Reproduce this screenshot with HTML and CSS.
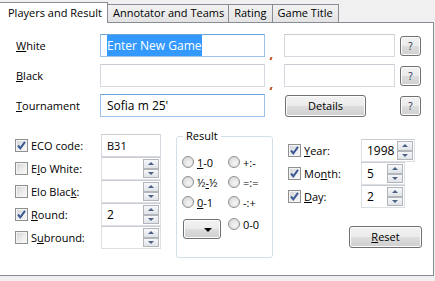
FILE: index.html
```html
<!DOCTYPE html>
<html>
<head>
<meta charset="utf-8">
<link rel="stylesheet" href="styles.css">
</head>
<body>
<div class="tabs">
  <div class="tab active">Players and Result</div>
  <div class="tab">Annotator and Teams</div>
  <div class="tab">Rating</div>
  <div class="tab">Game Title</div>
</div>
<div class="panel">
  <div class="players">
    <div class="lbl"><u>W</u>hite</div>
    <div class="tb focus"><span class="sel">Enter New Game</span></div>
    <div class="mark"></div>
    <div class="tb"></div>
    <div class="btn q">?</div>

    <div class="lbl"><u>B</u>lack</div>
    <div class="tb"></div>
    <div class="mark"></div>
    <div class="tb"></div>
    <div class="btn q">?</div>

    <div class="lbl"><u>T</u>ournament</div>
    <div class="tb focus">Sofia m 25'</div>
    <div></div>
    <div class="btn details">Details</div>
    <div class="btn q">?</div>
  </div>

  <div class="lower">
    <div class="left">
      <div class="row">
        <div class="chk on"><span class="box"></span>ECO code:</div>
        <div class="tb small">B31</div>
      </div>
      <div class="row">
        <div class="chk"><span class="box"></span>E<u>l</u>o White:</div>
        <div class="spin w60"><span class="val"></span><span class="arrows"><i class="up"></i><i class="dn"></i></span></div>
      </div>
      <div class="row">
        <div class="chk"><span class="box"></span>Elo Blac<u>k</u>:</div>
        <div class="spin w60"><span class="val"></span><span class="arrows"><i class="up"></i><i class="dn"></i></span></div>
      </div>
      <div class="row">
        <div class="chk on"><span class="box"></span><u>R</u>ound:</div>
        <div class="spin w60"><span class="val">2</span><span class="arrows"><i class="up"></i><i class="dn"></i></span></div>
      </div>
      <div class="row">
        <div class="chk"><span class="box"></span>S<u>u</u>bround:</div>
        <div class="spin w60"><span class="val"></span><span class="arrows"><i class="up"></i><i class="dn"></i></span></div>
      </div>
    </div>

    <div class="result">
      <div class="legend">Result</div>
      <div class="radios">
        <div class="radio"><span class="dot"></span><u>1</u>-0</div>
        <div class="radio"><span class="dot"></span>+:-</div>
        <div class="radio"><span class="dot"></span>½<u>-</u>½</div>
        <div class="radio"><span class="dot"></span>=:=</div>
        <div class="radio"><span class="dot"></span><u>0</u>-1</div>
        <div class="radio"><span class="dot"></span>-:+</div>
        <div class="combo"><span class="caret"></span></div>
        <div class="radio r00"><span class="dot"></span>0-0</div>
      </div>
    </div>

    <div class="right">
      <div class="row">
        <div class="chk on"><span class="box"></span><u>Y</u>ear:</div>
        <div class="spin w54"><span class="val">1998</span><span class="arrows"><i class="up"></i><i class="dn"></i></span></div>
      </div>
      <div class="row">
        <div class="chk on"><span class="box"></span>Mo<u>n</u>th:</div>
        <div class="spin w44"><span class="val">5</span><span class="arrows"><i class="up"></i><i class="dn"></i></span></div>
      </div>
      <div class="row">
        <div class="chk on"><span class="box"></span><u>D</u>ay:</div>
        <div class="spin w44"><span class="val">2</span><span class="arrows"><i class="up"></i><i class="dn"></i></span></div>
      </div>
      <div class="btn reset"><u>R</u>eset</div>
    </div>
  </div>
</div>
</body>
</html>
```

FILE: styles.css
```css
* { box-sizing: border-box; }
html, body { margin: 0; padding: 0; }
body {
  background: #f0f0f0;
  font-family: "Open Sans", "Noto Sans", sans-serif;
  font-size: 11px;
  color: #000;
  width: 435px;
  height: 281px;
  overflow: hidden;
}
u { text-decoration: underline; text-underline-offset: 1px; }

/* tabs */
.tabs {
  display: flex;
  align-items: flex-end;
  height: 22px;
}
.tab {
  height: 18px;
  padding: 0 5px;
  line-height: 16px;
  border: 1px solid #898c95;
  border-bottom: none;
  border-left: none;
  background: linear-gradient(#f2f2f2, #e3e3e3);
  white-space: nowrap;
}
.tab.active {
  position: relative;
  z-index: 1;
  height: 21px;
  margin-bottom: -1px;
  padding: 0 7px 0 8px;
  line-height: 19px;
  background: #fff;
  width: 108px;
}
.tab:nth-child(2) { padding: 0 4px 0 5px; }

/* panel */
.panel {
  width: 434px;
  height: 254px;
  background: #fff;
  border: 1px solid #898c95;
  border-left: none;
}

.players {
  display: grid;
  grid-template-columns: 84px 165px 19px 111px 21px;
  grid-auto-rows: 23px;
  row-gap: 7px;
  column-gap: 0;
  padding: 11px 0 0 16px;
  align-items: center;
}
.players .btn.q { margin-left: 5px; width: 21px; }

.tb {
  height: 23px;
  border: 1px solid #d5d9df;
  border-top-color: #c9ccd2;
  background: #fff;
  padding: 0 6px;
  line-height: 21px;
  font-size: 12px;
}
.tb.focus { border-color: #9cc4ea; border-top-color: #6ca3d9; }
.sel { background: #3399ff; color: #fff; padding: 2px 0; }
.tb.small { font-size: 11px; padding-left: 5px; }

.mark {
  align-self: end;
  justify-self: start;
  margin-left: 5px;
  margin-bottom: -3px;
  width: 2px;
  height: 3px;
  background: #c0501d;
  transform: skewX(-20deg);
}

.btn {
  height: 20px;
  border: 1px solid #707070;
  border-radius: 3px;
  background: linear-gradient(#f2f2f2 0%, #ebebeb 50%, #dddddd 51%, #cfcfcf 100%);
  box-shadow: inset 0 0 0 1px #fcfcfc;
  text-align: center;
  line-height: 18px;
}
.btn.q { font-size: 10px; color: #1a2a4a; }
.btn.details { width: 81px; height: 22px; line-height: 20px; margin-left: 1px; font-size: 11px; }

/* lower */
.lower {
  display: flex;
  align-items: flex-start;
  margin-top: 11px;
  padding-left: 15px;
}
.left { width: 146px; padding-top: 6px; display: flex; flex-direction: column; }
.row { display: flex; align-items: center; height: 23px; }
.left .row .chk { width: 86px; }
.right .row .chk { width: 73px; }

.chk { display: flex; align-items: center; white-space: nowrap; }
.chk .box {
  width: 13px;
  height: 13px;
  margin-right: 3px;
  border: 1px solid #8e8f8f;
  background: linear-gradient(135deg, #cfd1d4 0%, #eeeeee 60%, #fbfbfb 100%);
  box-shadow: inset 0 0 0 1px #f4f4f4;
  flex: none;
}
.chk.on .box {
  background:
    url("data:image/svg+xml;utf8,<svg xmlns='http://www.w3.org/2000/svg' width='11' height='11'><path d='M2 5.5 L4.3 8.3 L9 1.8' fill='none' stroke='%233b5a96' stroke-width='2'/></svg>") center/11px 11px no-repeat,
    linear-gradient(135deg, #cfd1d4 0%, #eeeeee 60%, #fbfbfb 100%);
}

.tb.small { width: 60px; }
.spin {
  display: flex;
  height: 23px;
  background: #fff;
  border: 1px solid #dcdfe3;
  border-top-color: #c9ccd2;
}
.w60 { width: 60px; }
.w54 { width: 54px; }
.w44 { width: 44px; }
.spin .val { flex: 1; padding-left: 5px; line-height: 21px; font-size: 12px; }
.spin .arrows {
  width: 17px;
  display: flex;
  flex-direction: column;
  padding: 1px 1px 1px 0;
}
.spin .arrows i {
  flex: 1;
  border: 1px solid #b2b5ba;
  background: linear-gradient(#f6f7f9, #dfe3e8);
  position: relative;
}
.spin .arrows i::after {
  content: "";
  position: absolute;
  left: 50%;
  top: 50%;
  margin-left: -3px;
  border-left: 3px solid transparent;
  border-right: 3px solid transparent;
}
.spin .arrows i.up::after { margin-top: -2px; border-bottom: 3px solid #4d6185; }
.spin .arrows i.dn::after { margin-top: -1px; border-top: 3px solid #4d6185; }

/* result group */
.result {
  position: relative;
  width: 97px;
  height: 122px;
  margin-left: 15px;
  margin-top: 8px;
  border: 1px solid #d5dfe5;
  border-radius: 3px;
  padding: 15px 0 0 5px;
}
.legend {
  position: absolute;
  top: -9px;
  left: 6px;
  background: #fff;
  padding: 0 3px;
  line-height: 16px;
}
.radios {
  display: grid;
  grid-template-columns: 46px 45px;
  grid-auto-rows: 20px;
  align-items: center;
}
.radio { display: flex; align-items: center; white-space: nowrap; }
.dot {
  width: 12px;
  height: 12px;
  border-radius: 50%;
  border: 1px solid #8e8f8f;
  background: radial-gradient(circle at 60% 60%, #f6f6f6 0%, #dcdcdc 70%, #cfd1d4 100%);
  margin-right: 3px;
  flex: none;
}
.combo {
  margin-top: 14px;
  width: 38px;
  height: 20px;
  border: 1px solid #707070;
  border-radius: 3px;
  background: linear-gradient(#f2f2f2 0%, #ebebeb 50%, #dddddd 51%, #cfcfcf 100%);
  box-shadow: inset 0 0 0 1px #fcfcfc;
  position: relative;
  margin-left: 1px;
}
.caret {
  position: absolute;
  right: 8px;
  top: 8px;
  border-left: 4px solid transparent;
  border-right: 4px solid transparent;
  border-top: 4px solid #000;
}
.r00 { margin-top: 4px; }

/* right column */
.right {
  margin-left: 15px;
  padding-top: 11px;
  width: 134px;
  display: flex;
  flex-direction: column;
}
.btn.reset {
  align-self: flex-end;
  width: 73px;
  height: 22px;
  line-height: 20px;
  margin-top: 18px;
}
```
